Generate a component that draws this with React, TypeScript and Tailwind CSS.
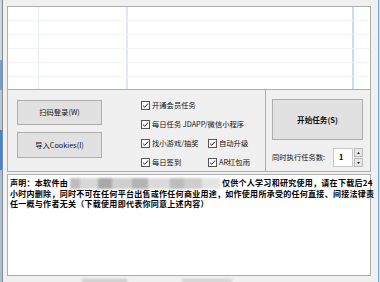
import React from 'react'

const CJK = "font-['Noto_Sans_CJK_SC','Noto_Sans',sans-serif]"

function Check({ label, className = '' }: { label: string; className?: string }) {
  return (
    <div className={`flex items-center gap-[2px] ${className}`}>
      <svg width="9" height="9" viewBox="0 0 9 9" className="shrink-0">
        <rect x="0.5" y="0.5" width="8" height="8" fill="#fff" stroke="#555" />
        <path d="M2 4.6 L3.8 6.3 L7 2.6" fill="none" stroke="#222" strokeWidth="1" />
      </svg>
      <span className="text-[7.3px] leading-none text-[#111] whitespace-nowrap">{label}</span>
    </div>
  )
}

function Btn({ children, className = '' }: { children: React.ReactNode; className?: string }) {
  return (
    <div
      className={`flex items-center justify-center bg-[#e1e1e1] border border-[#adadad] text-[7.3px] text-[#111] ${className}`}
    >
      {children}
    </div>
  )
}

export default function App() {
  const rows = [0, 1, 2, 3, 4, 5]
  return (
    <div className={`w-[380px] h-[282px] flex bg-[#f0f0f0] overflow-hidden ${CJK}`}>
      {/* desktop behind, left */}
      <div className="w-[3px] h-full flex flex-col border-r border-[#8a8a8a]">
        <div className="h-[60px] bg-[#c9d6e4]" />
        <div className="h-[30px] bg-[#6f9fd6]" />
        <div className="h-[40px] bg-[#b8c7d8]" />
        <div className="h-[40px] bg-[#3c86d9]" />
        <div className="flex-1 bg-[#a9bfd6]" />
      </div>

      <div className="flex-1 flex flex-col pt-[6px] pl-[4px]">
        {/* list view */}
        <div className="w-[364px] h-[83px] bg-white border border-[#adadad] border-b-0 flex flex-col overflow-hidden">
          {rows.map((r) => (
            <div key={r} className="h-[14px] shrink-0 flex border-b border-[#f3f3f3]">
              <div className="w-[31px] border-r border-[#e3eaf4]" />
              <div className="w-[89px] border-r-2 border-[#dde7f5]" />
              <div className="w-[226px] border-r-2 border-[#c7dcf5]" />
              <div className="flex-1" />
            </div>
          ))}
        </div>

        {/* option panel */}
        <div className="w-[364px] h-[83px] flex border border-[#adadad]">
          <div className="w-[258px] flex border-r border-[#adadad]">
            <div className="flex flex-col gap-[7px] pl-[9px] pt-[10px]">
              <Btn className="w-[85px] h-[25px]">扫码登录(W)</Btn>
              <Btn className="w-[85px] h-[26px]">导入Cookies(I)</Btn>
            </div>
            <div className="flex flex-col pl-[39px] pt-[11px] gap-[10px]">
              <Check label="开通会员任务" />
              <Check label="每日任务 JDAPP/微信小程序" />
              <div className="flex">
                <Check label="找小游戏/抽奖" className="w-[67px]" />
                <Check label="自动升级" />
              </div>
              <div className="flex">
                <Check label="每日签到" className="w-[67px]" />
                <Check label="AR红包雨" />
              </div>
            </div>
          </div>
          <div className="flex-1 flex flex-col pl-[6px] pt-[9px]">
            <Btn className="w-[91px] h-[41px] font-bold text-[7.6px]">开始任务(S)</Btn>
            <div className="flex items-center mt-[8px]">
              <span className="text-[7.3px] text-[#111] w-[61px] whitespace-nowrap">同时执行任务数:</span>
              <div className="w-[20px] h-[19px] bg-white border border-[#c8c8c8] flex items-center pl-[5px] text-[7.3px] font-bold">
                1
              </div>
              <div className="w-[9px] h-[19px] flex flex-col gap-[1px] ml-[1px]">
                <div className="flex-1 bg-[#e6e6e6] border border-[#bcbcbc] flex items-center justify-center">
                  <svg width="3" height="2" viewBox="0 0 3 2"><path d="M0 2 L1.5 0 L3 2Z" fill="#222" /></svg>
                </div>
                <div className="flex-1 bg-[#e6e6e6] border border-[#bcbcbc] flex items-center justify-center">
                  <svg width="3" height="2" viewBox="0 0 3 2"><path d="M0 0 L1.5 2 L3 0Z" fill="#222" /></svg>
                </div>
              </div>
            </div>
          </div>
        </div>

        {/* statement */}
        <div className="w-[364px] h-[102px] mt-[2px] bg-white border border-[#adadad] pl-[2px] pt-[3px]">
          <div className="text-[8px] leading-[10.2px] font-bold text-black tracking-[0.28px] whitespace-nowrap">
            <div className="flex items-center">
              <span>声明：本软件由</span>
              <span className="inline-flex w-[150px] h-[11px] mx-[2px] blur-[1.2px]">
                <span className="w-[10px] bg-[#bdbdbd]" />
                <span className="w-[18px] bg-[#d8d8d8]" />
                <span className="w-[14px] bg-[#a9a9a9]" />
                <span className="w-[20px] bg-[#cfcfcf]" />
                <span className="w-[16px] bg-[#b3b3b3]" />
                <span className="w-[22px] bg-[#dadada]" />
                <span className="w-[14px] bg-[#bcbcbc]" />
                <span className="w-[18px] bg-[#cdcdcd]" />
                <span className="w-[18px] bg-[#e4e4e4]" />
              </span>
              <span>仅供个人学习和研究使用，请在下载后24</span>
            </div>
            <div>小时内删除，同时不可在任何平台出售或作任何商业用途，如作使用所承受的任何直接、间接法律责</div>
            <div>任一概与作者无关（下载使用即代表你同意上述内容）</div>
          </div>
        </div>

        <div className="flex mt-[3px] h-[3px] blur-[1px]">
          <div className="w-[75px]" />
          <div className="w-[45px] bg-[#c9c9c9]" />
          <div className="w-[55px]" />
          <div className="w-[50px] bg-[#cfcfcf]" />
        </div>
      </div>

      {/* right edge */}
      <div className="w-[4px] h-full flex">
        <div className="w-[2px]" />
        <div className="w-[1px] bg-[#6fa6e0]" />
        <div className="w-[1px] bg-[#d7e3f0]" />
      </div>
    </div>
  )
}
